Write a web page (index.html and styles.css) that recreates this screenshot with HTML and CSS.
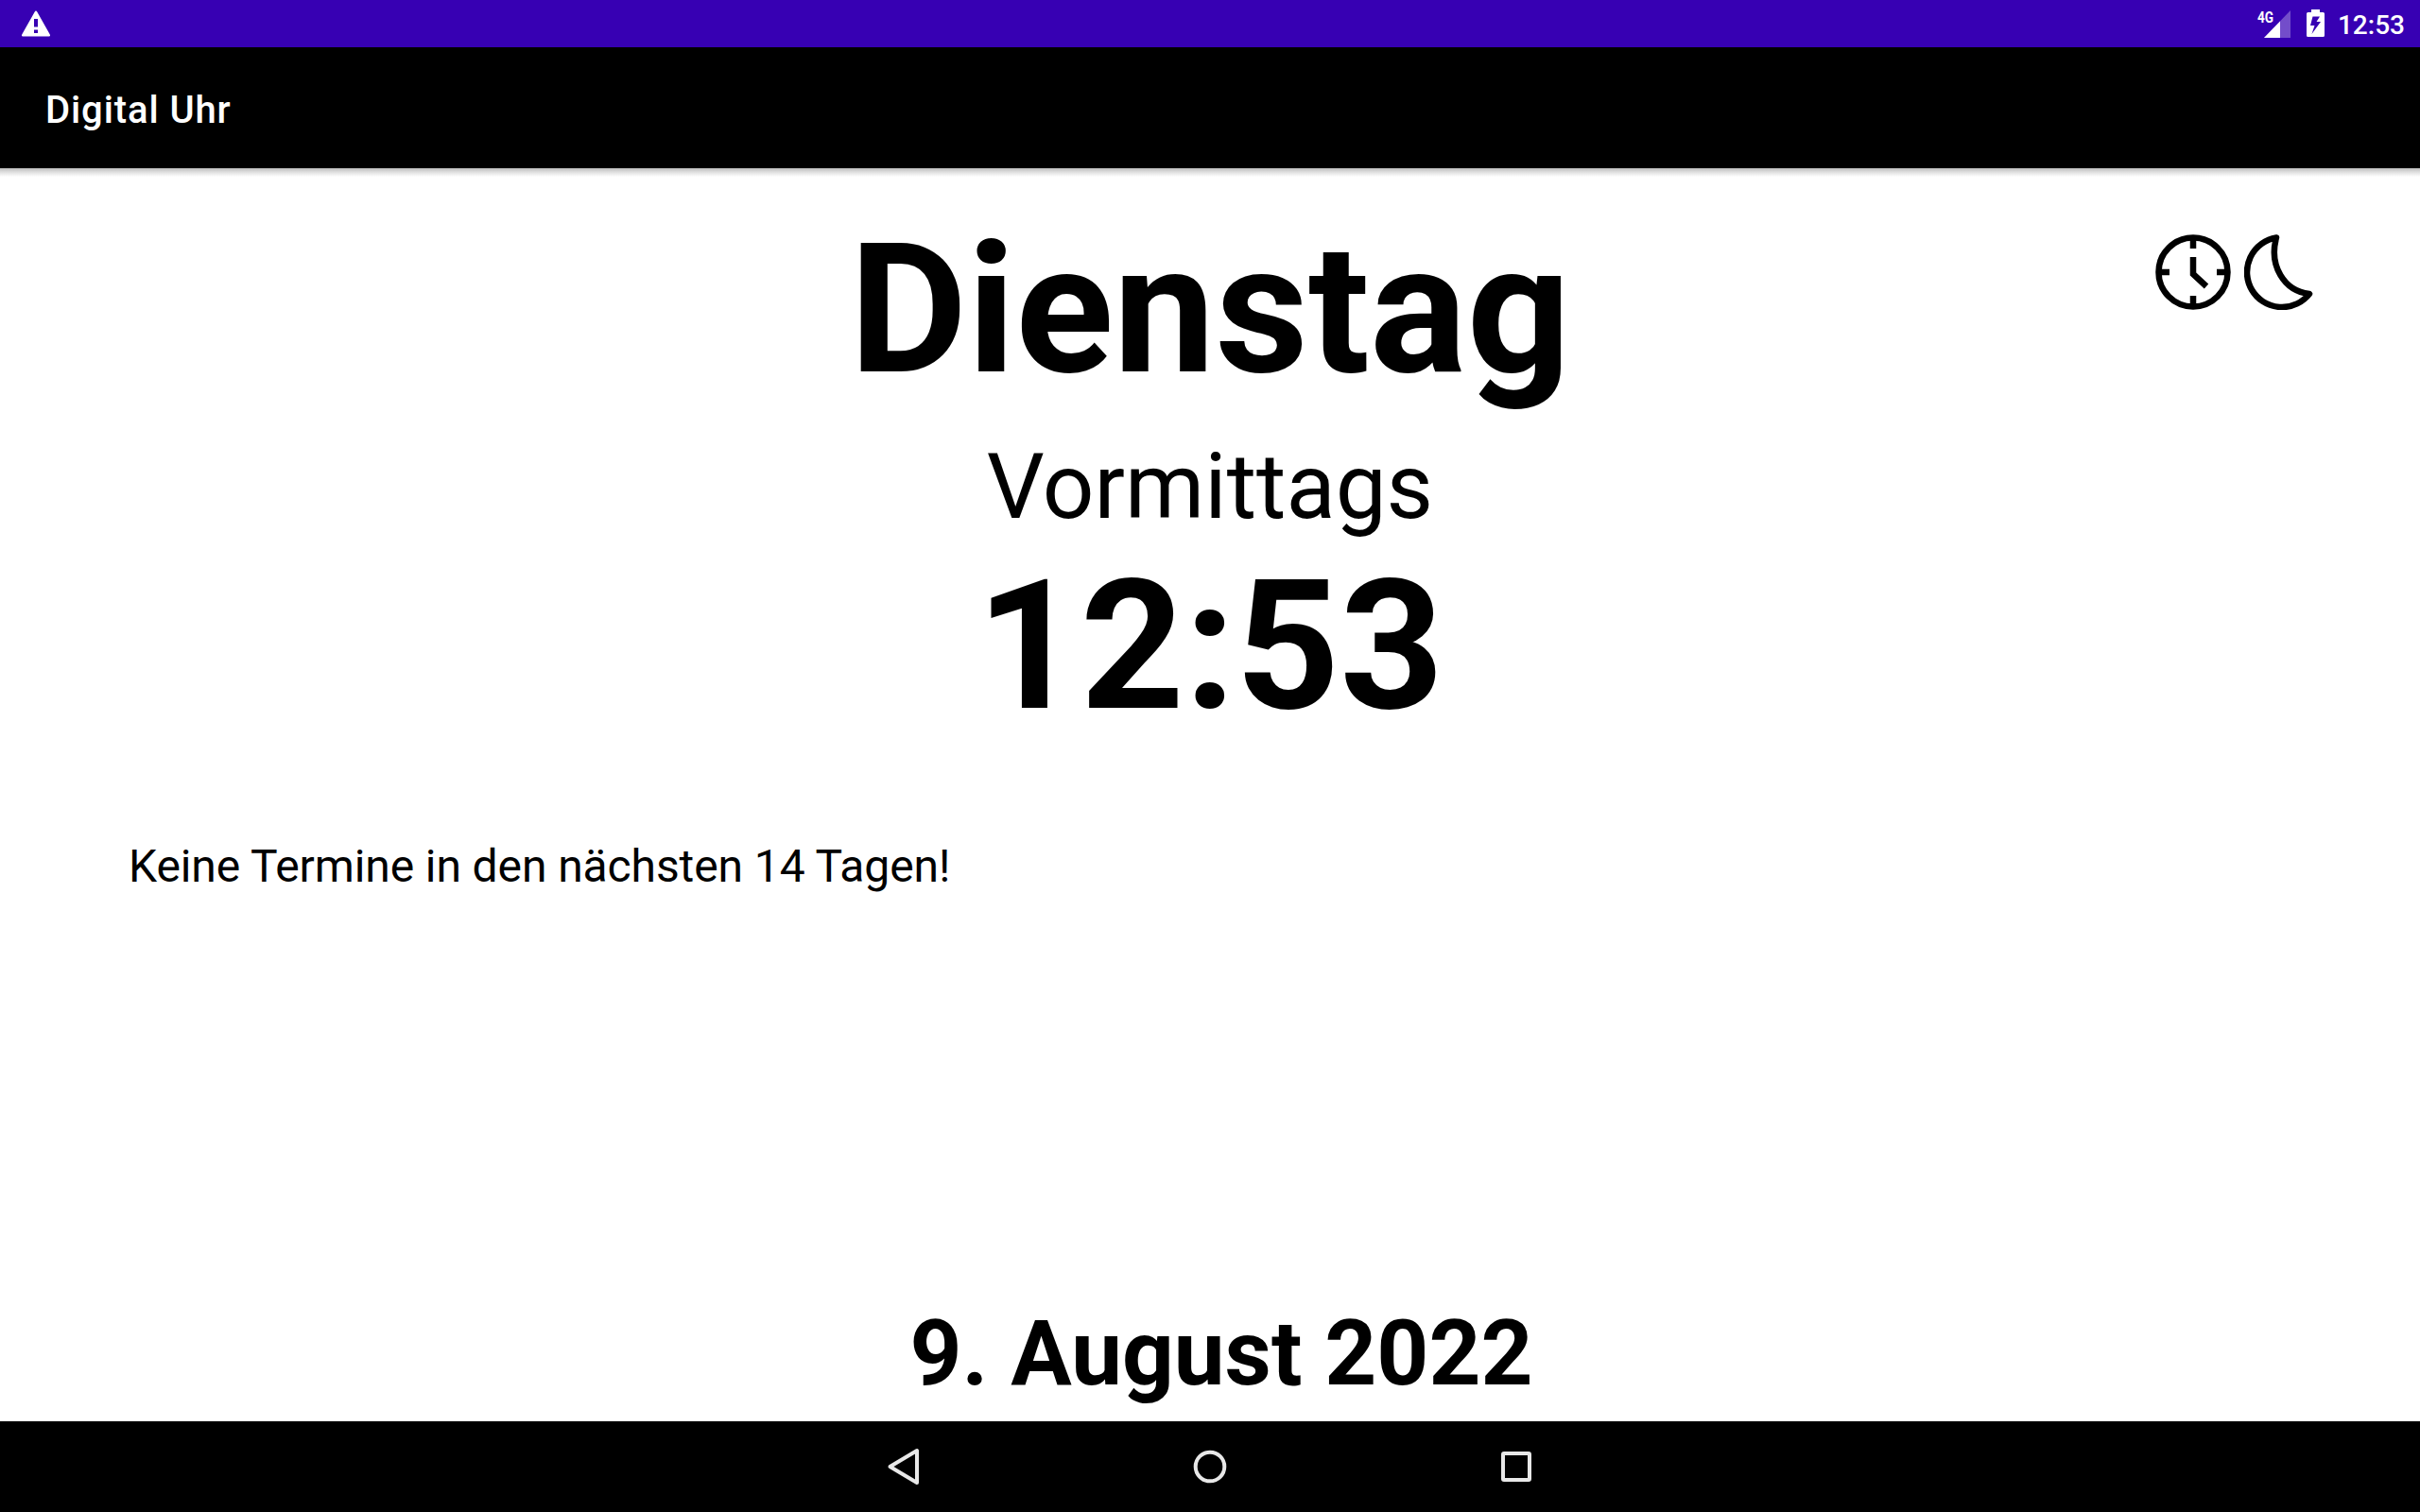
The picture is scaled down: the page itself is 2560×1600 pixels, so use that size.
FILE: index.html
```html
<!DOCTYPE html>
<html lang="de">
<head>
<meta charset="utf-8">
<title>Digital Uhr</title>
<link rel="stylesheet" href="styles.css">
</head>
<body>
<header class="status-bar">
  <svg class="status-warning" viewBox="0 0 32 28"><path fill="#fff" fill-rule="evenodd" d="M16 0.5Q15.2 0.5 14.6 1.7L1.2 25.5Q0.3 27.5 2 27.5H30Q31.7 27.5 30.8 25.5L17.4 1.7Q16.8 0.5 16 0.5ZM14 9H18V17.5H14ZM14 20.5H18V24H14Z"/></svg>
  <div class="status-right">
    <span class="network">4G</span>
    <svg class="signal" viewBox="0 0 28 29"><path fill="#fff" fill-opacity=".3" d="M28 0V29H0Z"/><path fill="#fff" d="M17 11.4V29H0Z"/></svg>
    <svg class="battery" viewBox="0 0 19 29"><path fill="#fff" fill-rule="evenodd" d="M5 0H14V3H17.500Q19 3 19 4.500V27.500Q19 29 17.500 29H1.500Q0 29 0 27.500V4.500Q0 3 1.500 3H5ZM6.500 7.500 4 17H8.500L5.500 26 15 13H10.500L14 7.500Z"/></svg>
    <span class="status-time">12:53</span>
  </div>
</header>
<div class="app-bar"><h1 class="app-title">Digital Uhr</h1></div>
<main class="clock">
  <div class="actions">
    <svg class="action-clock" viewBox="0 0 80 80" fill="none" stroke="#000" stroke-width="6.500"><circle cx="40" cy="40" r="36.500"/><path d="M40 3V15M40 65V77M3 40H15M65 40H77M40 24V42L54 55"/></svg>
    <svg class="action-moon" viewBox="0 0 74 80" fill="none" stroke="#000" stroke-width="6.500" stroke-linejoin="round"><path d="M34 3.500A37 37 0 1 0 69 63C42 60 26 33 34 3.500Z"/></svg>
  </div>
  <div class="weekday">Dienstag</div>
  <div class="daypart">Vormittags</div>
  <div class="time">12:53</div>
  <p class="events">Keine Termine in den nächsten 14 Tagen!</p>
  <div class="date">9. August 2022</div>
</main>
<nav class="nav-bar">
  <svg class="nav-icon" viewBox="0 0 48 48"><path d="M38 7V41L9.500 24Z"/></svg>
  <svg class="nav-icon" viewBox="0 0 48 48"><circle cx="24" cy="24" r="15.300"/></svg>
  <svg class="nav-icon" viewBox="0 0 48 48"><rect x="10" y="10" width="28" height="28" rx="1"/></svg>
</nav>
</body>
</html>
```
FILE: styles.css
```css
* { box-sizing: border-box; }
body {
  margin: 0;
  width: 2560px;
  height: 1600px;
  display: flex;
  flex-direction: column;
  overflow: hidden;
  background: #fff;
  color: #000;
  font-family: Roboto, sans-serif;
}
svg { display: block; flex: none; }
.status-bar {
  height: 50px;
  flex: none;
  display: flex;
  justify-content: space-between;
  padding: 0 16px 0 22px;
  background: #3700b3;
  color: #fff;
}
.status-warning { width: 32px; height: 28px; margin-top: 10.500px; }
.status-right { display: flex; align-items: flex-start; }
.network {
  width: 7px;
  margin-top: 8px;
  font: 700 17px/20px Roboto, sans-serif;
  transform: scaleX(.8);
  transform-origin: left;
}
.signal { width: 28px; height: 29px; margin-top: 10.500px; }
.battery { width: 19px; height: 29px; margin: 10px 14px 0 17px; }
.status-time { font-size: 28px; font-weight: 500; line-height: 32px; margin-top: 10.500px; }
.app-bar {
  height: 128px;
  flex: none;
  display: flex;
  align-items: center;
  padding: 6px 48px 0;
  background: #000;
  color: #fff;
}
.app-title { margin: 0; font-size: 40px; font-weight: 500; line-height: 48px; letter-spacing: .9px; }
.clock {
  position: relative;
  flex: 1;
  display: flex;
  flex-direction: column;
  background: linear-gradient(#bdbdbd, #dedede 4px, #fff 9px);
  text-align: center;
}
.actions { position: absolute; top: 70px; right: 112px; display: flex; gap: 14px; }
.action-clock { width: 80px; height: 80px; }
.action-moon { width: 74px; height: 80px; }
.weekday, .time { font-size: 192px; font-weight: 700; line-height: 226px; }
.weekday { margin-top: 37px; }
.daypart { font-size: 96px; line-height: 112px; margin-top: 18px; }
.time { margin-top: 0; }
.events { margin: 92px 136px 0; font-size: 48px; line-height: 56px; letter-spacing: -.1px; text-align: left; }
.date { margin-top: auto; padding: 0 0 16px 24px; font-size: 96px; font-weight: 700; line-height: 112px; }
.nav-bar {
  height: 96px;
  flex: none;
  display: flex;
  justify-content: center;
  align-items: center;
  gap: 276px;
  background: #000;
}
.nav-icon { width: 48px; height: 48px; fill: none; stroke: #e8e8e8; stroke-width: 4; stroke-linejoin: round; }
```
